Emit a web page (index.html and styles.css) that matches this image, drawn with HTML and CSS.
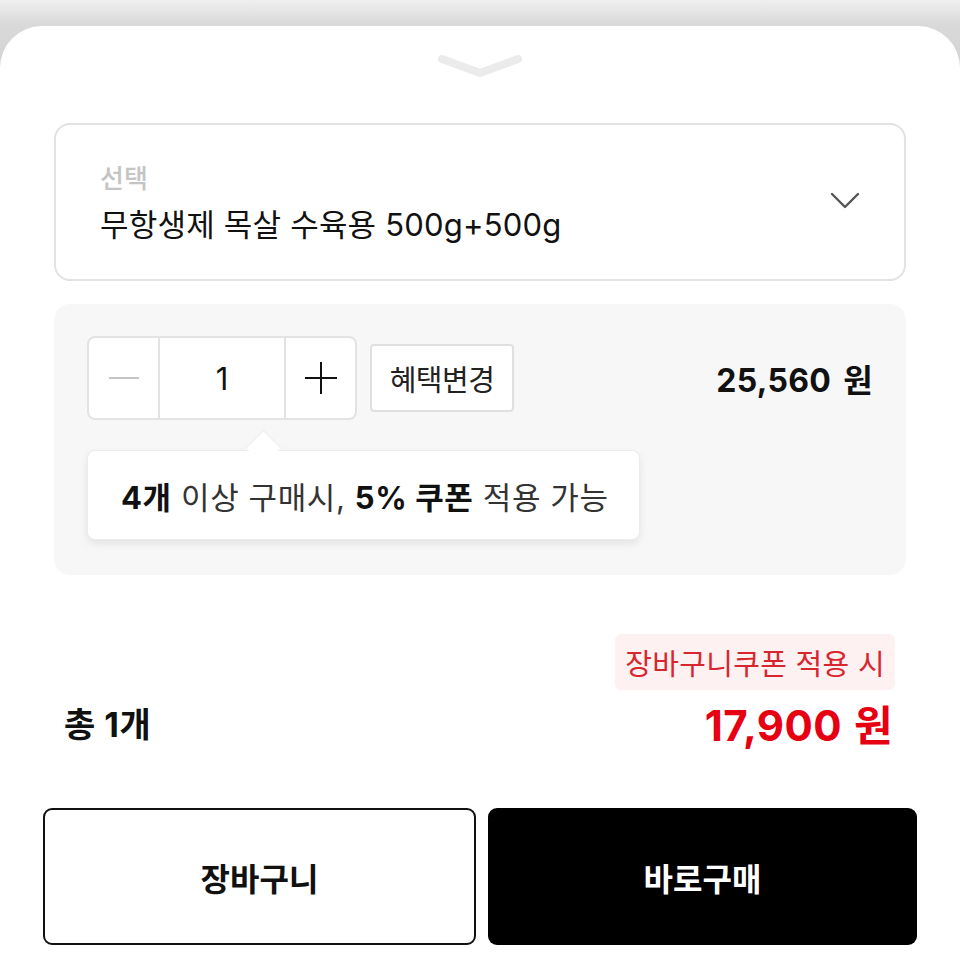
FILE: index.html
```html
<!DOCTYPE html>
<html lang="ko">
<head>
<meta charset="utf-8">
<link rel="stylesheet" href="styles.css">
</head>
<body>
<div class="sheet">
  <div class="handle">
    <svg width="86" height="26" viewBox="0 0 86 26"><path d="M5 6 L43 20 L81 6" fill="none" stroke="#ebebeb" stroke-width="8" stroke-linecap="round" stroke-linejoin="round"/></svg>
  </div>
  <div class="select">
    <div class="select-text">
      <div class="select-label">선택</div>
      <div class="select-value">무항생제 목살 수육용 500g+500g</div>
    </div>
    <svg class="select-chev" width="30" height="18" viewBox="0 0 30 18"><path d="M2 2 L15 15 L28 2" fill="none" stroke="#555" stroke-width="2.4" stroke-linecap="round" stroke-linejoin="round"/></svg>
  </div>
  <div class="option">
    <div class="option-row">
      <div class="stepper">
        <div class="step step-minus"><svg width="30" height="4" viewBox="0 0 30 4"><rect x="0" y="1" width="30" height="2" fill="#c4c4c4"/></svg></div>
        <div class="step step-num">1</div>
        <div class="step step-plus"><svg width="32" height="32" viewBox="0 0 32 32"><rect x="0" y="15" width="32" height="2" fill="#111"/><rect x="15" y="0" width="2" height="32" fill="#111"/></svg></div>
      </div>
      <div class="benefit">혜택변경</div>
      <div class="option-price">25,560<span class="won">원</span></div>
    </div>
    <div class="tooltip"><span class="tooltip-text"><b>4개</b> 이상 구매시, <b>5% 쿠폰</b> 적용 가능</span></div>
  </div>
  <div class="summary">
    <div class="total">총 1개</div>
    <div class="summary-right">
      <div class="coupon-pill">장바구니쿠폰 적용 시</div>
      <div class="final-price">17,900<span class="won won-lg">원</span></div>
    </div>
  </div>
  <div class="actions">
    <div class="btn btn-cart">장바구니</div>
    <div class="btn btn-buy">바로구매</div>
  </div>
</div>
</body>
</html>
```
FILE: styles.css
```css
html, body {
  margin: 0;
  padding: 0;
}
body {
  width: 960px;
  height: 960px;
  overflow: hidden;
  background: linear-gradient(#f0f0f0 0px, #d9d9d9 24px, #d4d4d4 60px, #e6e6e6 140px, #f3f3f3 200px);
  font-family: "Inter", "Noto Sans CJK KR", "Noto Sans", sans-serif;
  color: #111;
}
.sheet {
  margin-top: 26px;
  height: 934px;
  background: #fff;
  border-radius: 42px 42px 0 0;
  display: flex;
  flex-direction: column;
}
.handle {
  height: 97px;
  display: flex;
  justify-content: center;
  align-items: flex-start;
}
.handle svg {
  margin-top: 27px;
}
.select {
  margin: 0 54px;
  height: 158px;
  box-sizing: border-box;
  border: 2px solid #e2e2e2;
  border-radius: 16px;
  display: flex;
  align-items: center;
  justify-content: space-between;
  padding: 0 44px 0 44px;
}
.select-text {
  display: flex;
  flex-direction: column;
  gap: 8px;
  margin-top: 4px;
}
.select-label {
  font-size: 26px;
  font-weight: 500;
  color: #c4c4c4;
  line-height: 34px;
}
.select-value {
  font-size: 31px;
  line-height: 42px;
  color: #111;
  letter-spacing: 0.2px;
}
.select-chev {
  margin-bottom: 2px;
}
.option {
  margin: 23px 54px 0;
  height: 271px;
  box-sizing: border-box;
  background: #f7f7f7;
  border-radius: 16px;
  padding: 32px 33px 0 33px;
  display: flex;
  flex-direction: column;
}
.option-row {
  display: flex;
  align-items: center;
  height: 84px;
}
.stepper {
  display: flex;
  height: 84px;
  box-sizing: border-box;
  border: 2px solid #e3e3e3;
  border-radius: 8px;
  background: #fff;
}
.step {
  display: flex;
  align-items: center;
  justify-content: center;
}
.step-minus {
  width: 69px;
}
.step-num {
  width: 124px;
  border-left: 2px solid #e3e3e3;
  border-right: 2px solid #e3e3e3;
  font-size: 31px;
  font-weight: 400;
  color: #111;
}
.step-plus {
  width: 69px;
}
.benefit {
  margin-left: 13px;
  height: 68px;
  width: 144px;
  box-sizing: border-box;
  border: 2px solid #e0e0e0;
  border-radius: 4px;
  background: #fff;
  display: flex;
  align-items: center;
  justify-content: center;
  font-size: 29px;
  color: #222;
  letter-spacing: -0.5px;
}
.option-price {
  margin-left: auto;
  font-size: 32px;
  font-weight: 700;
  color: #111;
  letter-spacing: 0.3px;
}
.won {
  margin-left: 12px;
}
.won-lg {
  margin-left: 12px;
}
.tooltip {
  position: relative;
  margin-top: 30px;
  width: 553px;
  height: 90px;
  box-sizing: border-box;
  background: #fff;
  border: 1px solid #ececec;
  border-radius: 8px;
  box-shadow: 0 4px 8px rgba(0,0,0,0.08);
  display: flex;
  align-items: center;
  padding-left: 33px;
  font-size: 31px;
  color: #333;
  letter-spacing: 0.6px;
}
.tooltip-text b {
  color: #111;
  font-weight: 700;
}
.tooltip::before {
  content: "";
  position: absolute;
  left: 163px;
  top: -16px;
  width: 24px;
  height: 24px;
  background: #fff;
  border-left: 1px solid #ececec;
  border-top: 1px solid #ececec;
  transform: rotate(45deg);
}
.summary {
  margin: 59px 67px 0 64px;
  display: flex;
  justify-content: space-between;
  align-items: flex-end;
}
.total {
  font-size: 34px;
  font-weight: 700;
  line-height: 50px;
  margin-bottom: 2px;
  letter-spacing: 0.5px;
}
.summary-right {
  display: flex;
  flex-direction: column;
  align-items: flex-end;
}
.coupon-pill {
  height: 56px;
  box-sizing: border-box;
  padding: 0 10px;
  margin-right: -2px;
  background: #fdf1f1;
  border-radius: 6px;
  display: flex;
  align-items: center;
  font-size: 29px;
  letter-spacing: 0.3px;
  color: #d8262e;
}
.final-price {
  margin-top: 10px;
  font-size: 42px;
  line-height: 52px;
  font-weight: 700;
  color: #e60012;
  letter-spacing: 0.4px;
}
.actions {
  margin: 56px 43px 0;
  display: flex;
  gap: 12px;
}
.btn {
  flex: 1;
  height: 137px;
  box-sizing: border-box;
  border-radius: 9px;
  display: flex;
  align-items: center;
  justify-content: center;
  font-size: 32px;
  font-weight: 700;
}
.btn-cart {
  border: 2px solid #111;
  background: #fff;
  color: #111;
}
.btn-buy {
  background: #000;
  color: #fff;
}
```
